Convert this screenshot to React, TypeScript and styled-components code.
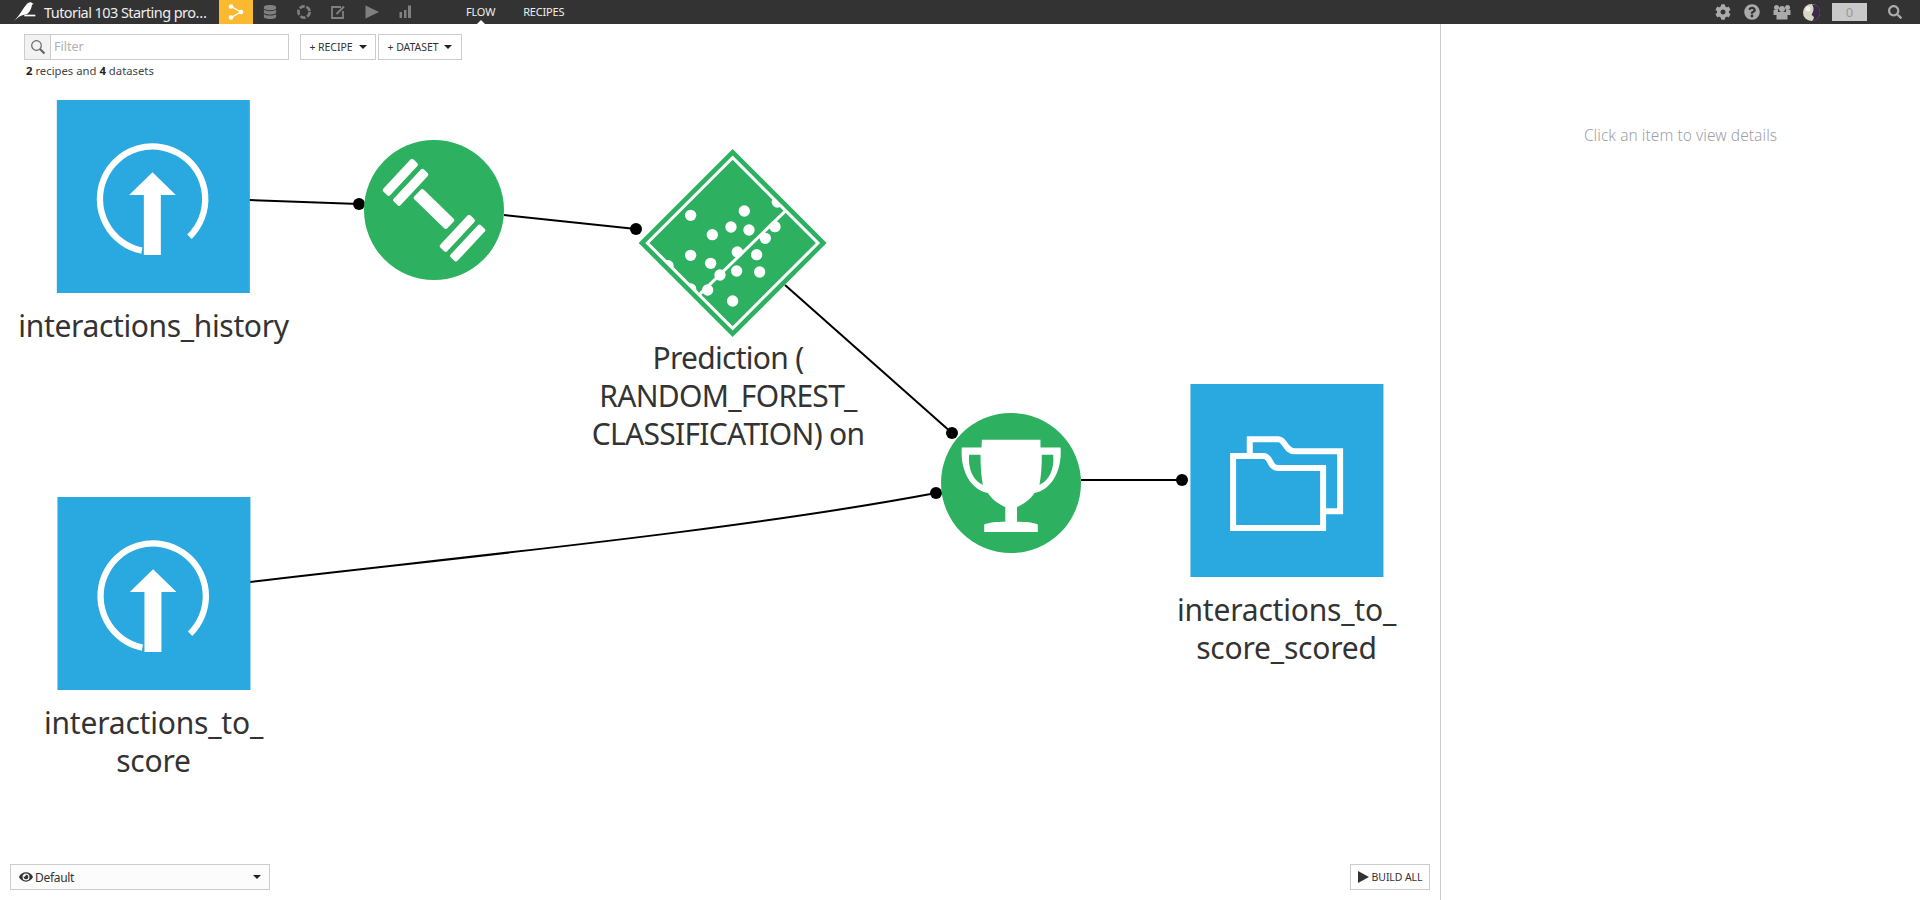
import React from 'react';
import styled, { createGlobalStyle } from 'styled-components';
import { FaCog, FaDatabase, FaQuestionCircle, FaEye, FaSearch } from 'react-icons/fa';

const FONT = '"Noto Sans", "Open Sans", sans-serif';

const GlobalStyle = createGlobalStyle`
  html, body {
    margin: 0;
    padding: 0;
    height: 100%;
    background: #fff;
    font-family: ${FONT};
    color: #333;
  }
  #root { height: 100%; }
`;

const Page = styled.div`
  display: flex;
  flex-direction: column;
  height: 900px;
  overflow: hidden;
`;

/* top bar */
const TopBar = styled.header`
  display: flex;
  align-items: center;
  flex: none;
  height: 24px;
  background: #333;
  color: #fff;
`;

const LogoSlot = styled.div`
  display: flex;
  align-items: center;
  width: 44px;
  padding-left: 7px;
  box-sizing: border-box;
`;

const ProjectTitle = styled.div`
  width: 175px;
  font-size: 14.5px;
  letter-spacing: -0.57px;
  white-space: nowrap;
  color: #eee;
`;

const NavIcon = styled.div<{ $active?: boolean }>`
  display: flex;
  align-items: center;
  justify-content: center;
  width: 34px;
  height: 24px;
  color: #808080;
  background: ${(p) => (p.$active ? '#fbb92f' : 'transparent')};
`;

const TabGroup = styled.nav`
  display: flex;
  gap: 28px;
  margin-left: 43px;
`;

const Tab = styled.div<{ $active?: boolean }>`
  position: relative;
  font-size: 11px;
  line-height: 24px;
  letter-spacing: -0.2px;
  color: #eee;

  ${(p) =>
    p.$active &&
    `&::after {
      content: '';
      position: absolute;
      left: 50%;
      bottom: 0;
      margin-left: -4px;
      border: 4px solid transparent;
      border-top: 0;
      border-bottom-color: #fff;
    }`}
`;

const RightTools = styled.div`
  display: flex;
  align-items: center;
  margin-left: auto;
  color: #aaa;
`;

const ToolIcon = styled.div`
  display: flex;
  align-items: center;
  justify-content: center;
  width: 29.5px;
  height: 24px;
`;

const Counter = styled.div`
  width: 35px;
  height: 18px;
  margin: 0 3px 0 6px;
  background: #c9c9c9;
  color: #999;
  font-size: 13px;
  line-height: 18px;
  text-align: center;
`;

const SearchSlot = styled.div`
  display: flex;
  justify-content: center;
  width: 50px;
`;

/* body */
const Body = styled.div`
  display: flex;
  flex: 1;
  min-height: 0;
`;

const FlowPane = styled.main`
  position: relative;
  display: flex;
  flex-direction: column;
  width: 1440px;
  flex: none;
`;

const Toolbar = styled.div`
  position: relative;
  z-index: 1;
  display: flex;
  gap: 2px;
  padding: 10px 0 0 24px;
`;

const FilterBox = styled.div`
  display: flex;
  width: 265px;
  height: 26px;
  margin-right: 9px;
  box-sizing: border-box;
  border: 1px solid #ccc;
`;

const FilterAddon = styled.div`
  display: flex;
  align-items: center;
  justify-content: center;
  width: 25px;
  background: #f2f2f2;
  border-right: 1px solid #ccc;
  color: #666;
`;

const FilterText = styled.div`
  padding-left: 3px;
  font-size: 12.5px;
  line-height: 24px;
  color: #b0b0b0;
`;

const ActionButton = styled.div<{ $width: number }>`
  display: flex;
  align-items: center;
  justify-content: center;
  gap: 6px;
  width: ${(p) => p.$width}px;
  height: 26px;
  box-sizing: border-box;
  border: 1px solid #ccc;
  font-size: 10.5px;
  letter-spacing: -0.05px;
  color: #333;
  background: #fff;
`;

const Caret = styled.span`
  width: 0;
  height: 0;
  border: 4px solid transparent;
  border-bottom: 0;
  border-top: 4px solid #222;
`;

const Summary = styled.div`
  position: relative;
  z-index: 1;
  padding: 2px 0 0 26px;
  font-size: 11.3px;
  line-height: 17px;
  color: #444;

  b { color: #222; }
`;

const Footer = styled.div`
  position: relative;
  z-index: 1;
  display: flex;
  justify-content: space-between;
  margin-top: auto;
  padding: 0 10px 10px;
`;

const ViewSelect = styled.div`
  display: flex;
  align-items: center;
  gap: 2px;
  width: 260px;
  height: 26px;
  padding: 0 8px;
  box-sizing: border-box;
  border: 1px solid #ccc;
  background: #fcfcfc;
  font-size: 12px;
  letter-spacing: -0.3px;
  color: #333;

  ${Caret} { margin-left: auto; }
`;

const BuildButton = styled.div`
  display: flex;
  align-items: center;
  justify-content: center;
  gap: 3px;
  width: 80px;
  height: 26px;
  box-sizing: border-box;
  border: 1px solid #ccc;
  font-size: 10.5px;
  letter-spacing: -0.1px;
  color: #333;
`;

const SidePane = styled.aside`
  flex: 1;
  border-left: 1px solid #ccc;
  padding-top: 99px;
  text-align: center;
  font-size: 15.5px;
  font-weight: 300;
  line-height: 24px;
  letter-spacing: 0.05px;
  color: #a0a0a6;
`;

/* flow canvas */
const Canvas = styled.div`
  position: absolute;
  inset: 0;
`;

const Edges = styled.svg`
  position: absolute;
  inset: 0;
`;

const Node = styled.div<{ $cx: number; $top: number }>`
  position: absolute;
  left: ${(p) => p.$cx}px;
  top: ${(p) => p.$top}px;
  transform: translateX(-50%);
  display: flex;
  flex-direction: column;
  align-items: center;
  width: max-content;
`;

const DatasetTile = styled.div`
  width: 193px;
  height: 193px;
  background: #29a9df;

  svg { display: block; }
`;

const RecipeDisc = styled.div`
  width: 140px;
  height: 140px;
  border-radius: 50%;
  background: #2db160;

  svg { display: block; }
`;

const NodeLabel = styled.div<{ $gap: number; $spacing: number; $shift?: number }>`
  margin-top: ${(p) => p.$gap}px;
  margin-left: ${(p) => p.$shift ?? 0}px;
  font-size: 30px;
  line-height: 38px;
  letter-spacing: ${(p) => p.$spacing}px;
  white-space: pre-line;
  text-align: center;
  color: #333;
`;

/* drawings */
function BirdLogo() {
  return (
    <svg width="29" height="24" viewBox="0 0 87 72" fill="#fff">
      <path d="M20 64C35 50 45 30 55 18C60 10 68 5 74 8L80 12L75 14C73 26 68 38 58 43L46 46L36 50Z" />
      <rect x="52" y="44" width="33" height="5" />
    </svg>
  );
}

function FlowGlyph() {
  return (
    <svg width="16" height="16" viewBox="0 0 16 16" fill="#fff" stroke="#fff" strokeWidth="1.4">
      <path d="M3 2.5L13 8L3 13.5" fill="none" />
      <circle cx="3" cy="2.5" r="1.6" />
      <circle cx="13" cy="8" r="1.6" />
      <circle cx="3" cy="13.5" r="1.6" />
    </svg>
  );
}

function RingGlyph() {
  return (
    <svg width="16" height="16" viewBox="0 0 16 16" fill="none" stroke="currentColor" strokeWidth="2.6">
      <circle cx="8" cy="8" r="5.6" strokeDasharray="5.3 1.74" />
    </svg>
  );
}

function EditGlyph() {
  return (
    <svg width="16" height="16" viewBox="0 0 16 16" fill="none" stroke="currentColor" strokeWidth="1.8">
      <path d="M11 3H2V14H13V7" />
      <path d="M6.5 10L14 2.5" strokeWidth="2" />
    </svg>
  );
}

function PlayGlyph() {
  return (
    <svg width="16" height="16" viewBox="0 0 16 16" fill="currentColor">
      <path d="M1.5 1.5L15 8L1.5 14.5Z" />
    </svg>
  );
}

function BarsGlyph() {
  return (
    <svg width="16" height="16" viewBox="0 0 16 16" fill="currentColor">
      <rect x="1.5" y="8" width="2.5" height="6" />
      <rect x="6" y="6" width="2.5" height="8" />
      <rect x="10" y="1.5" width="3" height="12.5" />
    </svg>
  );
}

function PeopleGlyph() {
  return (
    <svg width="18" height="16" viewBox="0 0 18 16" fill="currentColor">
      <circle cx="3.5" cy="3.5" r="2.5" />
      <circle cx="14.5" cy="3.5" r="2.5" />
      <circle cx="9" cy="5" r="3" />
      <path d="M0.5 6H5V15H13V6H17.5V11H14.5V15.5H3.5V11H0.5Z" />
      <rect x="4" y="8" width="10" height="7" />
    </svg>
  );
}

function AvatarGlyph() {
  return (
    <svg width="17" height="17" viewBox="0 0 17 17">
      <circle cx="8.5" cy="8.5" r="8.5" fill="#d8d6c4" />
      <path d="M9 0.2C15 0.5 17 5 17 8.5C17 13 13.5 17 9 17C12 14 11 12 8.5 11C10 8 12 5 9 0.2Z" fill="#3b2a4a" />
      <circle cx="5" cy="5" r="2.5" fill="#f3f2e6" />
    </svg>
  );
}

function LensGlyph() {
  return (
    <svg width="16" height="16" viewBox="0 0 16 16" fill="none" stroke="currentColor">
      <circle cx="6.5" cy="6.5" r="4.8" strokeWidth="1.2" />
      <path d="M10 10L14.5 14.5" strokeWidth="2.2" />
    </svg>
  );
}

function UploadIcon() {
  return (
    <svg width="193" height="193" viewBox="50 30 579 579">
      <path d="M448 440A158 158 0 1 0 305 482" fill="none" stroke="#fff" strokeWidth="19" />
      <path d="M337 247L407 315H362V495H311V315H267Z" fill="#fff" />
    </svg>
  );
}

function DumbbellIcon() {
  return (
    <svg width="140" height="140" viewBox="-70 -70 140 140" fill="#fff">
      <g transform="translate(-33.7 -32.7) rotate(-47)"><rect x="-22" y="-4.7" width="44" height="9.4" rx="2" /></g>
      <g transform="translate(-23.3 -22.7) rotate(-47)"><rect x="-22" y="-4.7" width="44" height="9.4" rx="2" /></g>
      <g transform="translate(23.3 23.3) rotate(-47)"><rect x="-22" y="-4.7" width="44" height="9.4" rx="2" /></g>
      <g transform="translate(33.7 33) rotate(-47)"><rect x="-22" y="-4.7" width="44" height="9.4" rx="2" /></g>
      <g transform="translate(0 -1) rotate(44)"><rect x="-23" y="-6.7" width="46" height="13.4" rx="2" /></g>
    </svg>
  );
}

const MODEL_DOTS: [number, number][] = [
  [214, 257], [375, 244], [335, 292], [389, 301], [279, 315], [467, 291], [438, 326],
  [214, 377], [274, 401], [354, 367], [412, 375], [302, 436], [352, 424], [421, 427],
  [265, 481], [340, 514], [474, 217], [146, 408], [214, 478],
];

function ModelDiamond() {
  return (
    <svg width="188" height="188" viewBox="58 58 564 564">
      <defs>
        <clipPath id="model-inner">
          <polygon points="340,84 596,340 340,596 84,340" />
        </clipPath>
      </defs>
      <polygon points="340,58 622,340 340,622 58,340" fill="#2db160" />
      <polygon points="340,84 596,340 340,596 84,340" fill="none" stroke="#fff" strokeWidth="9" />
      <line x1="497" y1="245" x2="240" y2="495" stroke="#fff" strokeWidth="9" />
      <g clipPath="url(#model-inner)" fill="#fff">
        {MODEL_DOTS.map(([cx, cy]) => (
          <circle key={`${cx}-${cy}`} cx={cx} cy={cy} r="17" />
        ))}
      </g>
    </svg>
  );
}

function TrophyIcon() {
  return (
    <svg width="140" height="140" viewBox="63 131 418 418">
      <path
        d="M185 211H360V234H420C425 300 395 360 342 370C325 395 305 405 290 412V456C315 456 340 458 352 464V486H192V464C205 458 230 456 255 456V412C240 405 220 395 203 370C150 360 120 300 125 234H184Z"
        fill="#fff"
      />
      <path d="M147 256H181C181 290 183 320 188 345C160 335 143 300 147 256Z" fill="#2db160" />
      <path d="M398 256H364C364 290 362 320 357 345C385 335 402 300 398 256Z" fill="#2db160" />
    </svg>
  );
}

function FolderIcon() {
  return (
    <svg width="193" height="193" viewBox="811 42 579 579" fill="none" stroke="#fff" strokeWidth="18">
      <path d="M989 250V208H1075C1095 208 1095 244 1125 244H1260V424H1218" />
      <path d="M939 474V258H1030C1055 258 1045 294 1075 294H1209V474Z" />
    </svg>
  );
}

const DOTS: [number, number][] = [
  [359, 204],
  [636, 229],
  [952, 433],
  [936, 493],
  [1182, 480],
];

export default function App() {
  return (
    <>
      <GlobalStyle />
      <Page>
        <TopBar>
          <LogoSlot>
            <BirdLogo />
          </LogoSlot>
          <ProjectTitle>Tutorial 103 Starting pro…</ProjectTitle>
          <NavIcon $active>
            <FlowGlyph />
          </NavIcon>
          <NavIcon>
            <FaDatabase size={14} />
          </NavIcon>
          <NavIcon>
            <RingGlyph />
          </NavIcon>
          <NavIcon>
            <EditGlyph />
          </NavIcon>
          <NavIcon>
            <PlayGlyph />
          </NavIcon>
          <NavIcon>
            <BarsGlyph />
          </NavIcon>
          <TabGroup>
            <Tab $active>FLOW</Tab>
            <Tab>RECIPES</Tab>
          </TabGroup>
          <RightTools>
            <ToolIcon>
              <FaCog size={16} />
            </ToolIcon>
            <ToolIcon>
              <FaQuestionCircle size={16} />
            </ToolIcon>
            <ToolIcon>
              <PeopleGlyph />
            </ToolIcon>
            <ToolIcon>
              <AvatarGlyph />
            </ToolIcon>
            <Counter>0</Counter>
            <SearchSlot>
              <FaSearch size={14} />
            </SearchSlot>
          </RightTools>
        </TopBar>

        <Body>
          <FlowPane>
            <Canvas>
              <Edges width="1440" height="876" viewBox="0 24 1440 876">
                <g fill="none" stroke="#000" strokeWidth="2">
                  <path d="M249 200L359 204" />
                  <path d="M504 215L636 229" />
                  <path d="M785 285L952 433" />
                  <path d="M249 582C480 555 740 530 936 493" />
                  <path d="M1081 480H1182" />
                </g>
                {DOTS.map(([cx, cy]) => (
                  <circle key={cx} cx={cx} cy={cy} r="6" fill="#000" />
                ))}
              </Edges>
              <Node $cx={153.5} $top={76}>
                <DatasetTile>
                  <UploadIcon />
                </DatasetTile>
                <NodeLabel $gap={14} $spacing={-0.35}>interactions_history</NodeLabel>
              </Node>
              <Node $cx={434} $top={116}>
                <RecipeDisc>
                  <DumbbellIcon />
                </RecipeDisc>
              </Node>
              <Node $cx={733} $top={125}>
                <ModelDiamond />
                <NodeLabel $gap={2} $spacing={-0.7} $shift={-10}>
                  {'Prediction (\nRANDOM_FOREST_\nCLASSIFICATION) on'}
                </NodeLabel>
              </Node>
              <Node $cx={153.5} $top={473}>
                <DatasetTile>
                  <UploadIcon />
                </DatasetTile>
                <NodeLabel $gap={14} $spacing={-0.2}>{'interactions_to_\nscore'}</NodeLabel>
              </Node>
              <Node $cx={1011} $top={389}>
                <RecipeDisc>
                  <TrophyIcon />
                </RecipeDisc>
              </Node>
              <Node $cx={1286.5} $top={360}>
                <DatasetTile>
                  <FolderIcon />
                </DatasetTile>
                <NodeLabel $gap={14} $spacing={-0.2}>{'interactions_to_\nscore_scored'}</NodeLabel>
              </Node>
            </Canvas>

            <Toolbar>
              <FilterBox>
                <FilterAddon>
                  <LensGlyph />
                </FilterAddon>
                <FilterText>Filter</FilterText>
              </FilterBox>
              <ActionButton $width={76}>
                + RECIPE
                <Caret />
              </ActionButton>
              <ActionButton $width={84}>
                + DATASET
                <Caret />
              </ActionButton>
            </Toolbar>
            <Summary>
              <b>2</b> recipes and <b>4</b> datasets
            </Summary>

            <Footer>
              <ViewSelect>
                <FaEye size={14} />
                Default
                <Caret />
              </ViewSelect>
              <BuildButton>
                <svg width="11" height="12" viewBox="0 0 11 12" fill="#333">
                  <path d="M0 0L11 6L0 12Z" />
                </svg>
                BUILD ALL
              </BuildButton>
            </Footer>
          </FlowPane>
          <SidePane>Click an item to view details</SidePane>
        </Body>
      </Page>
    </>
  );
}
